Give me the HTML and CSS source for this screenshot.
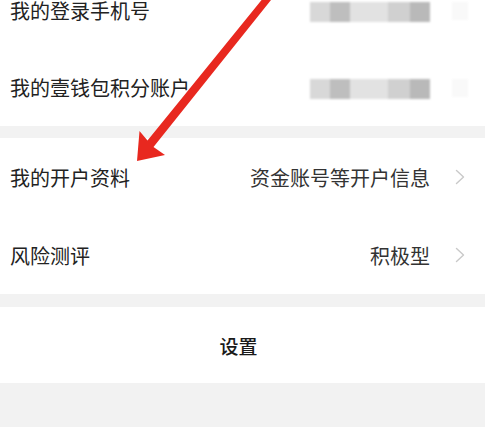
FILE: index.html
```html
<!DOCTYPE html>
<html lang="zh-CN">
<head>
<meta charset="utf-8">
<title>我的账户</title>
<link rel="stylesheet" href="styles.css">
</head>
<body>
<div class="page">
  <section class="group group-first">
    <div class="row">
      <span class="label">我的登录手机号</span>
      <span class="masked">
        <i class="s s1"></i><i class="s s2"></i><i class="s s3"></i><i class="s s4"></i><i class="s s5"></i>
      </span>
      <span class="ghost"></span>
    </div>
    <div class="row">
      <span class="label">我的壹钱包积分账户</span>
      <span class="masked">
        <i class="s s1"></i><i class="s s2"></i><i class="s s3"></i><i class="s s4"></i><i class="s s5"></i>
      </span>
      <span class="ghost"></span>
    </div>
  </section>
  <section class="group group-second">
    <div class="row row-tall">
      <span class="label">我的开户资料</span>
      <span class="value">资金账号等开户信息</span>
      <svg class="chev" viewBox="0 0 10 16" width="10" height="16"><path d="M1.5 1.5 L8.5 8 L1.5 14.5" fill="none" stroke="#c9c9c9" stroke-width="1.4" stroke-linecap="round" stroke-linejoin="round"/></svg>
    </div>
    <div class="row row-tall">
      <span class="label">风险测评</span>
      <span class="value">积极型</span>
      <svg class="chev" viewBox="0 0 10 16" width="10" height="16"><path d="M1.5 1.5 L8.5 8 L1.5 14.5" fill="none" stroke="#c9c9c9" stroke-width="1.4" stroke-linecap="round" stroke-linejoin="round"/></svg>
    </div>
  </section>
  <section class="group group-settings">
    <div class="settings">设置</div>
  </section>
</div>
<svg class="arrow" viewBox="0 0 485 427" width="485" height="427">
  <polygon points="137,161 139.5,131 147.5,140.5 264,-3 271,0 153.5,147 165,155" fill="#e8281f"/>
</svg>
</body>
</html>
```

FILE: styles.css
```css
html, body {
  margin: 0;
  padding: 0;
}
body {
  width: 485px;
  height: 427px;
  overflow: hidden;
  background: #f2f2f2;
  font-family: "Noto Sans CJK SC", "Noto Sans", sans-serif;
  color: #222;
  position: relative;
}
.page {
  display: flex;
  flex-direction: column;
}
.group {
  background: #fff;
}
.group-first {
  margin-top: -28px;
}
.group-second {
  margin-top: 12px;
}
.group-settings {
  margin-top: 13px;
}
.row {
  height: 77px;
  display: flex;
  align-items: center;
  padding: 0 17px 0 10px;
  font-size: 20px;
}
.row-tall {
  height: 78px;
}
.label {
  flex: 1;
  color: #222;
}
.value {
  color: #333;
  margin-right: 25px;
}
.masked {
  display: flex;
  height: 20px;
  margin-top: 2px;
  margin-right: 22px;
  filter: blur(0.8px);
}
.s {
  display: block;
  height: 20px;
}
.s1 { width: 20px; background: #d8d8d8; }
.s2 { width: 20px; background: #bebebe; }
.s3 { width: 38px; background: #e2e2e2; }
.s4 { width: 22px; background: #d0d0d0; }
.s5 { width: 20px; background: #b9b9b9; }
.ghost {
  width: 16px;
  height: 18px;
  background: #f9f9f9;
  filter: blur(1px);
}
.chev {
  display: block;
  margin-right: 3px;
}
.settings {
  height: 76px;
  display: flex;
  align-items: center;
  justify-content: center;
  padding-right: 8px;
  font-size: 19px;
  font-weight: 500;
  color: #1a1a1a;
}
.arrow {
  position: absolute;
  left: 0;
  top: 0;
  pointer-events: none;
}
```
